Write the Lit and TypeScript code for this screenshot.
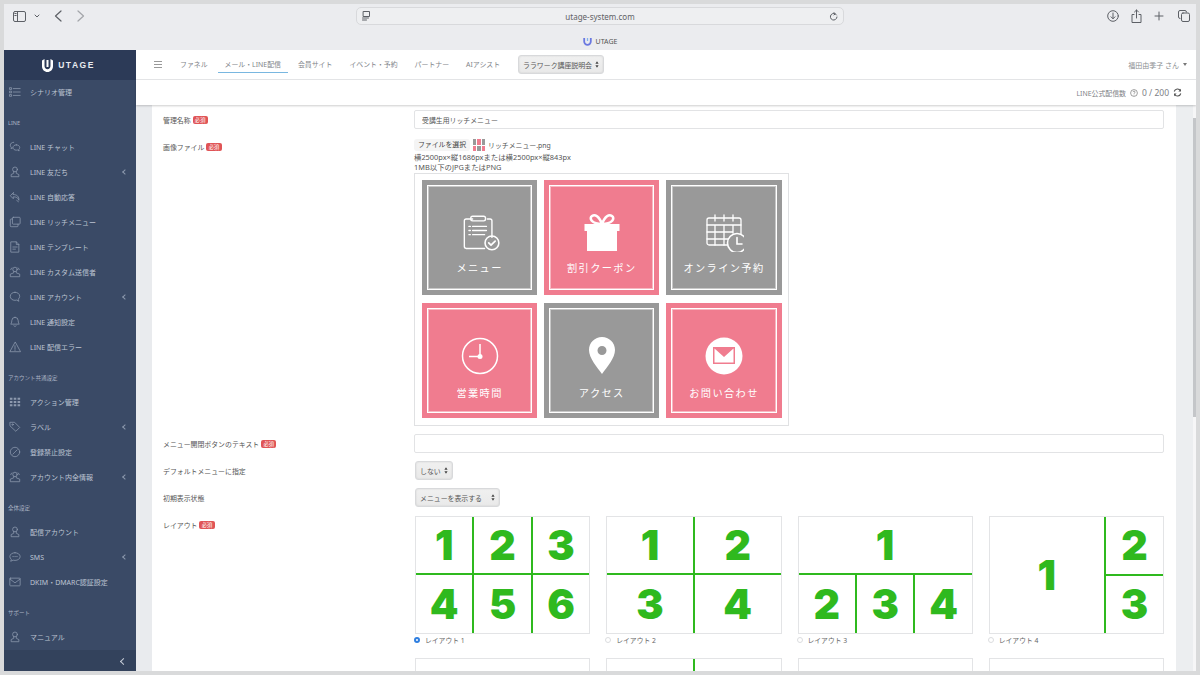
import { LitElement, html, css, svg } from "lit";
import { customElement } from "lit/decorators.js";

const ic: Record<string, any> = {
  list: svg`<path d="M5 3h8M5 7h8M5 11h8"/><rect x="1" y="2" width="2" height="2"/><rect x="1" y="6" width="2" height="2"/><rect x="1" y="10" width="2" height="2"/>`,
  chat: svg`<path d="M5.5 1.5c-2.3 0-4 1.5-4 3.4 0 1 .5 1.8 1.2 2.4l-.3 1.6 1.700-.8"/><path d="M8.500 4.500c-2.300 0-3.800 1.400-3.800 3.100s1.500 3.100 3.800 3.100c.5 0 1 0 1.400-.2l1.900 1.100-.4-1.800c.7-.6 1.100-1.300 1.100-2.200 0-1.700-1.700-3.100-4-3.100z"/>`,
  user: svg`<circle cx="7" cy="4" r="2.800"/><path d="M5.500 6.500v2L2.500 10v2.500h9V10l-3-1.500v-2"/>`,
  reply: svg`<path d="M5 2 1.500 5.500 5 9V6.800c3.500 0 5.500 1 6.500 4 .5-4-2-6.600-6.500-6.800z"/><path d="M9 11l2 1.500"/>`,
  rich: svg`<rect x="4" y="1.500" width="9" height="8" rx="1"/><path d="M4 3.500H2.500a1 1 0 0 0-1 1v7a1 1 0 0 0 1 1h7a1 1 0 0 0 1-1V9.500"/>`,
  file: svg`<path d="M2.500 1h6l3 3v9h-9z"/><path d="M8.500 1v3h3M4.500 7h5M4.500 9.500h3"/>`,
  users: svg`<circle cx="7" cy="4" r="2.600"/><path d="M5.500 6.500V8L1.500 9.500v3h11v-3L8.500 8V6.500"/><path d="M3.500 2.200A2.300 2.300 0 0 0 2 4.200M10.500 2.200a2.300 2.300 0 0 1 1.500 2"/>`,
  bubble: svg`<path d="M7 1.500c-3.200 0-5.500 2-5.500 4.700s2.300 4.700 5.500 4.700c.7 0 1.300-.1 1.900-.3l2.600 1.400-.7-2.500c1-.9 1.700-2 1.700-3.300 0-2.700-2.300-4.700-5.500-4.700z"/>`,
  bell: svg`<path d="M7 1.500a3.700 3.700 0 0 0-3.700 3.700c0 3-1.300 4.300-1.300 4.300h10s-1.300-1.300-1.300-4.300A3.700 3.700 0 0 0 7 1.500zM5.700 11.500c.4 1 2.200 1 2.600 0"/>`,
  warn: svg`<path d="M7 1.500 1 12.500h12zM7 5.500v3.500M7 10.200v.8"/>`,
  grid: svg`<g fill="#8d99ae" stroke="none"><rect x="1" y="2" width="3" height="2.400"/><rect x="5.500" y="2" width="3" height="2.400"/><rect x="10" y="2" width="3" height="2.400"/><rect x="1" y="5.800" width="3" height="2.400"/><rect x="5.500" y="5.800" width="3" height="2.400"/><rect x="10" y="5.800" width="3" height="2.400"/><rect x="1" y="9.600" width="3" height="2.400"/><rect x="5.500" y="9.600" width="3" height="2.400"/><rect x="10" y="9.600" width="3" height="2.400"/></g>`,
  tag: svg`<path d="M1.500 1.500h5l6 6-4.500 4.500-6.500-6z"/><circle cx="4.200" cy="4.200" r=".8"/>`,
  ban: svg`<circle cx="7" cy="7" r="5.500"/><path d="M4.500 9.500l5-5"/>`,
  sms: svg`<path d="M7 2C3.700 2 1 3.900 1 6.500c0 1.300.7 2.400 1.700 3.200L2 12l2.800-1.300c.7.2 1.400.3 2.200.3 3.300 0 6-2 6-4.500S10.300 2 7 2z"/><path d="M4.500 6.500h.6M6.800 6.500h.6M9 6.500h.6"/>`,
  mail: svg`<rect x="1" y="2.500" width="12" height="9" rx=".8"/><path d="M1 3.500 7 8l6-4.500"/>`,
};

const sideTop = [
  { t: "item", i: "list", s: "シナリオ管理" },
  { t: "head", s: "LINE" },
  { t: "item", i: "chat", s: "LINE チャット" },
  { t: "item", i: "user", s: "LINE 友だち", c: 1 },
  { t: "item", i: "reply", s: "LINE 自動応答" },
  { t: "item", i: "rich", s: "LINE リッチメニュー" },
  { t: "item", i: "file", s: "LINE テンプレート" },
  { t: "item", i: "users", s: "LINE カスタム送信者" },
  { t: "item", i: "bubble", s: "LINE アカウント", c: 1 },
  { t: "item", i: "bell", s: "LINE 通知設定" },
  { t: "item", i: "warn", s: "LINE 配信エラー" },
  { t: "head", s: "アカウント共通設定" },
  { t: "item", i: "grid", s: "アクション管理" },
  { t: "item", i: "tag", s: "ラベル", c: 1 },
  { t: "item", i: "ban", s: "登録禁止設定" },
  { t: "item", i: "users", s: "アカウント内全情報", c: 1 },
  { t: "head", s: "全体設定" },
  { t: "item", i: "user", s: "配信アカウント" },
  { t: "item", i: "sms", s: "SMS", c: 1 },
  { t: "item", i: "mail", s: "DKIM・DMARC認証設定" },
  { t: "head", s: "サポート" },
  { t: "item", i: "user", s: "マニュアル" },
];

const W = "#fff";
const tileIcons: Record<string, any> = {
  clip: svg`<g transform="translate(2.500 1.500) scale(.92)" fill="none" stroke="${W}" stroke-width="1.500" stroke-linecap="round" stroke-linejoin="round"><path d="M27 6h3a2 2 0 0 1 2 2v18M24 38H4a2 2 0 0 1-2-2V8a2 2 0 0 1 2-2h7"/><rect x="9" y="3" width="16" height="5" rx="2"/><path d="M11 14h15M11 18.500h15M11 23h13M7 14h1.500M7 18.500h1.500M7 23h1.500"/><circle cx="32" cy="32" r="7.500" stroke-width="1.700"/><path d="M28.500 32l2.500 2.500 4.500-4.500" stroke-width="1.900"/></g>`,
  gift: svg`<g fill="${W}"><rect x="2.500" y="12" width="35" height="7"/><rect x="5" y="18" width="30" height="21"/></g><path d="M20 12c-3-8-7-10-10-8-3 2-1 8 10 8zM20 12c3-8 7-10 10-8 3 2 1 8-10 8z" fill="none" stroke="${W}" stroke-width="2.600"/>`,
  cal: svg`<g transform="translate(2 1)" fill="none" stroke="${W}" stroke-width="1.300" stroke-linecap="round"><path d="M24 32H3a2 2 0 0 1-2-2V7a2 2 0 0 1 2-2h30a2 2 0 0 1 2 2v15"/><path d="M1 12h34M9 2v6M18 2v6M27 2v6M1 19h26M1 26h22M9 12v20M18 12v20M27 12v8"/><circle cx="31" cy="30" r="9.500" fill="#999" stroke-width="1.600"/><path d="M31 24.500V31h5" stroke-width="1.600"/></g>`,
  clock: svg`<circle cx="20" cy="20" r="17.500" fill="none" stroke="${W}" stroke-width="1.500"/><path d="M20 8v12.500H9" fill="none" stroke="${W}" stroke-width="1.500"/><circle cx="20" cy="20.500" r="2.500" fill="${W}"/>`,
  pin: svg`<path fill-rule="evenodd" fill="${W}" d="M20 1c7 0 13 5.500 13 13 0 8-8 17-13 24-5-7-13-16-13-24C7 6.500 13 1 20 1zm0 9a4.500 4.500 0 1 0 0 9 4.500 4.500 0 0 0 0-9z"/>`,
  mail: svg`<circle cx="20" cy="20" r="18.500" fill="${W}"/><rect x="9" y="11" width="22" height="17" fill="#f07c8f"/><path d="M10.500 12.500 20 21l9.500-8.500V26.500h-19z" fill="${W}"/>`,
};

const tiles = [
  { i: "clip", s: "メニュー", p: 0 },
  { i: "gift", s: "割引クーポン", p: 1 },
  { i: "cal", s: "オンライン予約", p: 0 },
  { i: "clock", s: "営業時間", p: 1 },
  { i: "pin", s: "アクセス", p: 0 },
  { i: "mail", s: "お問い合わせ", p: 1 },
];

const layouts = [
  { k: "l1", d: ["1", "2", "3", "4", "5", "6"], n: "レイアウト 1", on: true },
  { k: "l2", d: ["1", "2", "3", "4"], n: "レイアウト 2" },
  { k: "l3", d: ["1", "2", "3", "4"], n: "レイアウト 3" },
  { k: "l4", d: ["1", "2", "3"], n: "レイアウト 4" },
  { k: "l0", d: [""] },
  { k: "l6", d: ["", ""] },
  { k: "l0", d: [""] },
  { k: "l0", d: [""] },
];

const arrows = html`<svg class="updown" viewBox="0 0 5 8"><path d="M2.500 0 4.500 3H.5zM2.500 8 .5 5h4z" /></svg>`;
const req = html`<span class="badge">必須</span>`;

@customElement("app-root")
export class AppRoot extends LitElement {
  static styles = css`
    :host { display: block; width: 1200px; height: 675px; overflow: hidden; background: #d9dadb;
      font-family: "Noto Sans", "Noto Sans CJK JP", sans-serif; font-size: 6.900px; color: #555; }
    * { box-sizing: border-box; }
    .frame { margin: 4px 4px 0; height: 667px; display: flex; flex-direction: column; overflow: hidden; background: #ebecef; }
    .toolbar { height: 21px; flex: none; display: flex; align-items: center; padding: 3px 6px 0 9px; }
    .toolbar svg { display: block; fill: none; stroke: #5d6066; stroke-width: 1; stroke-linecap: round; stroke-linejoin: round; }
    .left { width: 343px; display: flex; align-items: center; }
    .gap-8 { margin-left: 8px; }
    .gap-14 { margin-left: 14px; }
    .gap-15 { margin-left: 15px; opacity: .5; }
    .url { width: 488px; height: 18px; border: 1px solid #d8d9dc; border-radius: 5px; background: #eeeff1; display: flex; align-items: center; padding: 0 5px; }
    .url span { flex: 1; text-align: center; color: #5e6166; font-size: 8px; }
    .right { flex: 1; display: flex; justify-content: flex-end; align-items: center; gap: 12px; }
    .right svg:last-child { margin-left: 2px; }
    .tabstrip { height: 25px; flex: none; display: flex; justify-content: center; align-items: center; gap: 4px; color: #555; font-size: 7px; padding-top: 8px; }
    .app { flex: 1; display: flex; min-height: 0; }
    .side { width: 132px; flex: none; background: #3a4a66; display: flex; flex-direction: column; }
    .brand { height: 30px; flex: none; background: #2c3a57; display: flex; align-items: center; justify-content: center; gap: 5px; padding-right: 3px; color: #e8ebf0; font-family: "Liberation Sans", sans-serif; font-weight: 700; font-size: 8.500px; letter-spacing: 1.500px; }
    .menu { flex: 1; }
    .item { height: 25px; display: flex; align-items: center; padding-left: 5px; color: #bcc4d2; font-size: 7px; padding-bottom: 1px; }
    .item svg { width: 12px; height: 12px; margin-right: 9px; flex: none; fill: none; stroke: #8d99ae; stroke-width: .9; stroke-linejoin: round; stroke-linecap: round; }
    .item b { margin-left: auto; margin-right: 9px; font-weight: 400; width: 4px; height: 4px; border-left: 1px solid #8d99ae; border-bottom: 1px solid #8d99ae; transform: rotate(45deg); }
    .head { height: 30px; display: flex; align-items: center; padding: 6px 0 0 4px; color: #aab3c4; font-size: 5.500px; }
    .collapse { height: 22px; flex: none; background: #33425c; display: flex; align-items: center; justify-content: flex-end; padding-right: 10px; }
    .collapse i { width: 5px; height: 5px; border-left: 1.500px solid #c8ced9; border-bottom: 1.500px solid #c8ced9; transform: rotate(45deg); }
    .main { flex: 1; min-width: 0; display: flex; flex-direction: column; background: #e9ebee; }
    .topnav { height: 30px; flex: none; background: #fff; border-bottom: 1px solid #e6e7e9; display: flex; align-items: center; padding-left: 18px; color: #808388; }
    .burger { width: 8px; height: 7px; border-top: 1px solid #999; border-bottom: 1px solid #999; margin-right: 11px; }
    .burger::after { content: ""; display: block; height: 1px; background: #999; margin-top: 2px; }
    .nav { display: flex; gap: 3px; }
    .nav span { height: 17px; padding: 0 7px; display: flex; align-items: center; border-bottom: 1px solid transparent; white-space: nowrap; }
    .nav span.on { border-bottom-color: #79b7e0; }
    .sel { display: inline-flex; align-items: center; justify-content: space-between; border: 1px solid #d8d9db; border-radius: 3px; background: linear-gradient(#f0f0f0, #e9e9e9); box-shadow: inset 0 0 2px rgba(0,0,0,.12); color: #555; padding: 0 4px; white-space: nowrap; }
    .updown { width: 4px; height: 7px; fill: #444; flex: none; }
    .topsel { width: 86px; height: 19px; margin-left: 11px; }
    .user { margin-left: auto; display: flex; align-items: center; gap: 4px; padding-right: 9px; color: #8a8d91; font-size: 7px; }
    .caret { width: 0; height: 0; border: 2.500px solid transparent; border-top: 3px solid #777; border-bottom: 0; }
    .subbar { height: 25px; flex: none; background: #fff; box-shadow: 0 1px 2px rgba(0,0,0,.2); display: flex; align-items: center; justify-content: flex-end; gap: 4px; padding-right: 14px; color: #7d8085; position: relative; z-index: 1; }
    .count { font-size: 8.500px; }
    .subbar svg { display: block; }
    .scroll { flex: 1; min-height: 0; display: flex; }
    .card { width: 1024px; margin-left: 16px; background: #fff; padding: 5px 12px 0 11px; display: flex; flex-direction: column; gap: 8px; overflow: hidden; }
    .row { display: grid; grid-template-columns: 251px 750px; flex: none; }
    .row.file { padding-top: 2px; }
    .row.lay { padding-top: 1px; }
    .lab { display: flex; align-items: center; gap: 2px; height: 19px; color: #555; white-space: nowrap; align-self: start; }
    .file .lab { height: 15px; }
    .lay .lab { height: 18px; }
    .badge { background: #e05456; color: #fff; border-radius: 2px; font-size: 5.300px; line-height: 8px; height: 8px; padding: 0 2.300px; }
    input { display: block; font: inherit; color: #555; width: 750px; height: 19px; border: 1px solid #e2e3e5; border-radius: 2px; padding: 0 7px; background: #fff; }
    .fileline { display: flex; align-items: center; height: 12px; gap: 3px; }
    .choose { background: #f4f4f4; border-radius: 3px; height: 12px; line-height: 12px; width: 56px; white-space: nowrap; text-align: center; color: #444; }
    .thumb { width: 12px; height: 12px; display: grid; grid-template-columns: repeat(3, 1fr); gap: 1px; }
    .thumb i:nth-child(odd) { background: #999; }
    .thumb i:nth-child(even) { background: #f07c8f; }
    .hint { line-height: 10px; height: 10px; color: #555; white-space: nowrap; font-size: 7.400px; }
    .hint.first { margin-top: 1px; }
    .box { width: 375px; height: 253px; margin-top: 1px; border: 1px solid #e0e1e3; padding: 6px 7px; display: grid; grid-template-columns: repeat(3, 115.200px); grid-auto-rows: 115px; column-gap: 7px; row-gap: 8px; }
    .tile { background: #999; padding: 5px; }
    .tile.pink { background: #f07c8f; }
    .tile div { height: 100%; border: 1px solid #fff; box-shadow: inset 0 0 0 1px rgba(255,255,255,.45); display: flex; flex-direction: column; align-items: center; padding-top: 26px; gap: 8px; color: #fff; font-size: 10.200px; letter-spacing: 1.400px; line-height: 16px; white-space: nowrap; }
    .tile:nth-child(n+4) div { padding-top: 27px; gap: 9px; }
    .tile svg { width: 40px; height: 40px; display: block; flex: none; }
    .s1 { width: 38px; height: 19px; margin-left: 1px; }
    .s2 { width: 85px; height: 19px; margin-left: 1px; }
    .grid { display: grid; grid-template-columns: repeat(4, 175.250px); column-gap: 16px; row-gap: 12px; margin-left: 1px; }
    .cell { height: 118px; border: 1px solid #e3e4e6; background: #2fb91e; display: grid; gap: 2px; overflow: hidden; }
    .cell span { background: #fff; display: flex; align-items: center; justify-content: center; color: #2fb91e; font-family: "Inter", "Liberation Sans", sans-serif; font-weight: 900; font-size: 41px; line-height: 1; }
    .l1 { grid-template-columns: repeat(3, 1fr); grid-template-rows: 56px 1fr; }
    .l2 { grid-template-columns: 1fr 1fr; grid-template-rows: 56px 1fr; }
    .l3 { grid-template-columns: repeat(3, 1fr); grid-template-rows: 56px 1fr; }
    .l3 span:first-child { grid-column: span 3; }
    .l4 { grid-template-columns: 2fr 1fr; grid-template-rows: 1fr 1fr; }
    .l4 span:first-child { grid-row: span 2; }
    .l6 { grid-template-columns: 1fr 1fr; }
    .l0 { grid-template-columns: 1fr; }
    .radio { display: flex; align-items: center; gap: 5px; height: 12px; font-size: 6.800px; color: #666; margin-left: -1px; }
    .dot { width: 6px; height: 6px; border-radius: 50%; border: 1px solid #dcdddf; background: #fff; flex: none; }
    .dot.on { border: 2px solid #2f7fe0; }
    .track { flex: 1; display: flex; justify-content: flex-end; background: #eceef0; }
    .rail { width: 3px; background: #f6f6f7; padding-top: 13px; }
    .thumbbar { height: 299px; background: #c4c6c9; }
  `;

  render() {
    return html`<div class="frame">
      <div class="toolbar">
        <div class="left">
          <svg width="13" height="11" viewBox="0 0 13 11"><rect x=".5" y=".5" width="12" height="10" rx="1.500"/><path d="M4.500 .5v10"/><path d="M1.800 2.500h1.400M1.800 4.500h1.400" /></svg>
          <svg class="gap-8" width="6" height="4" viewBox="0 0 6 4"><path d="M1 1l2 2 2-2"/></svg>
          <svg class="gap-14" width="8" height="12" viewBox="0 0 8 12"><path d="M7 1 1.500 6 7 11" stroke-width="1.200"/></svg>
          <svg class="gap-15" width="8" height="12" viewBox="0 0 8 12"><path d="M1 1l5.500 5L1 11" stroke-width="1.200"/></svg>
        </div>
        <div class="url">
          <svg width="9" height="10" viewBox="0 0 9 10"><rect x="1.500" y=".5" width="6" height="5"/><path d="M.5 7h6M.5 9h4" /></svg>
          <span>utage-system.com</span>
          <svg width="9" height="9" viewBox="0 0 9 9"><path d="M7.500 3A3.300 3.300 0 1 0 8 5M5 .5 6.200 1.800 5 3"/></svg>
        </div>
        <div class="right">
          <svg width="12" height="12" viewBox="0 0 12 12"><circle cx="6" cy="6" r="5.300"/><path d="M6 3v5.500M4 6.800l2 2 2-2"/></svg>
          <svg width="11" height="14" viewBox="0 0 11 14"><path d="M3 5.500H1v8h9v-8H8M5.500 9V1M3.500 3l2-2 2 2"/></svg>
          <svg width="10" height="10" viewBox="0 0 10 10"><path d="M5 1v8M1 5h8"/></svg>
          <svg width="12" height="12" viewBox="0 0 12 12"><rect x="3.500" y="3" width="8" height="8.500" rx="1.500"/><path d="M2 8.500A1.500 1.500 0 0 1 .5 7V2A1.500 1.500 0 0 1 2 .5h5A1.500 1.500 0 0 1 8.500 2"/></svg>
        </div>
      </div>
      <div class="tabstrip">
        <svg width="9" height="9" viewBox="0 0 9 9"><path d="M1.200 1v3.500a3.300 3.300 0 0 0 6.600 0V1" fill="none" stroke="#6a78e0" stroke-width="1.800"/><path d="M4.500 1v3" stroke="#7fb2ee" stroke-width="1.300"/></svg>
        <span>UTAGE</span>
      </div>
      <div class="app">
        <aside class="side">
          <div class="brand">
            <svg width="11" height="13" viewBox="0 0 11 13"><path fill="#fff" d="M0 1.500 2.500 0v7c0 2 1.300 3.200 3 3.200S8.500 9 8.500 7V0L11 1.500v5.700C11 10.500 8.500 13 5.500 13S0 10.500 0 7.200z"/><rect x="4.500" y="1" width="2" height="7" fill="#fff"/></svg>
            <span>UTAGE</span>
          </div>
          <div class="menu">
            ${sideTop.map((m) =>
              m.t === "head"
                ? html`<div class="head">${m.s}</div>`
                : html`<div class="item"><svg viewBox="0 0 14 14">${ic[m.i!]}</svg><span>${m.s}</span>${m.c ? html`<b></b>` : ""}</div>`
            )}
          </div>
          <div class="collapse"><i></i></div>
        </aside>
        <div class="main">
          <div class="topnav">
            <div class="burger"></div>
            <div class="nav">
              <span>ファネル</span><span class="on">メール・LINE配信</span><span>会員サイト</span><span>イベント・予約</span><span>パートナー</span><span>AIアシスト</span>
            </div>
            <div class="sel topsel"><span>ララワーク講座説明会</span>${arrows}</div>
            <div class="user"><span>福田由季子 さん</span><i class="caret"></i></div>
          </div>
          <div class="subbar">
            <span>LINE公式配信数</span>
            <svg width="8" height="8" viewBox="0 0 8 8"><circle cx="4" cy="4" r="3.400" fill="none" stroke="#777" stroke-width=".7"/><path d="M2.900 3.100c.2-1.200 2.200-1.200 2.200 0 0 .8-1.100.8-1.100 1.700M4 5.700v.6" fill="none" stroke="#777" stroke-width=".7"/></svg>
            <span class="count">0 / 200</span>
            <svg width="9" height="9" viewBox="0 0 9 9"><path d="M1.200 3.500A3.400 3.400 0 0 1 7.500 2.800M7.800 5.500A3.400 3.400 0 0 1 1.500 6.200" fill="none" stroke="#555" stroke-width="1.100"/><path d="M8 .8v2.700H5.400zM1 8.200V5.500h2.600z" fill="#555"/></svg>
          </div>
          <div class="scroll">
            <div class="card">
              <div class="row">
                <div class="lab">管理名称 ${req}</div>
                <input value="受講生用リッチメニュー" />
              </div>
              <div class="row file">
                <div class="lab">画像ファイル ${req}</div>
                <div>
                  <div class="fileline">
                    <span class="choose">ファイルを選択</span>
                    <span class="thumb"><i></i><i></i><i></i><i></i><i></i><i></i></span>
                    <span>リッチメニュー.png</span>
                  </div>
                  <div class="hint first">横2500px×縦1686pxまたは横2500px×縦843px</div>
                  <div class="hint">1MB以下のJPGまたはPNG</div>
                  <div class="box">
                    ${tiles.map(
                      (t) => html`<div class="tile ${t.p ? "pink" : ""}"><div><svg viewBox="0 0 40 40">${tileIcons[t.i]}</svg><span>${t.s}</span></div></div>`
                    )}
                  </div>
                </div>
              </div>
              <div class="row">
                <div class="lab">メニュー開閉ボタンのテキスト ${req}</div>
                <input />
              </div>
              <div class="row">
                <div class="lab">デフォルトメニューに指定</div>
                <div class="sel s1"><span>しない</span>${arrows}</div>
              </div>
              <div class="row">
                <div class="lab">初期表示状態</div>
                <div class="sel s2"><span>メニューを表示する</span>${arrows}</div>
              </div>
              <div class="row lay">
                <div class="lab">レイアウト ${req}</div>
                <div class="grid">
                  ${layouts.map(
                    (l) => html`<div>
                      <div class="cell ${l.k}">${l.d.map((d) => html`<span>${d}</span>`)}</div>
                      <div class="radio"><i class="dot ${l.on ? "on" : ""}"></i><span>${l.n ?? ""}</span></div>
                    </div>`
                  )}
                </div>
              </div>
            </div>
            <div class="track"><div class="rail"><div class="thumbbar"></div></div></div>
          </div>
        </div>
      </div>
    </div>`;
  }
}
